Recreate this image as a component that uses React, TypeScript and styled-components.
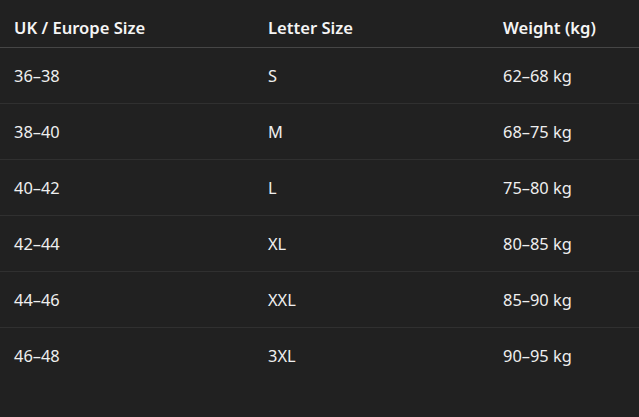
import React from "react";
import styled, { createGlobalStyle } from "styled-components";

const Global = createGlobalStyle`
  html, body { margin: 0; padding: 0; background: #212121; }
  body { font-family: "Noto Sans", "Open Sans", sans-serif; color: #ececec; }
`;

const Table = styled.div`
  display: grid;
  grid-template-columns: 254px 235px 1fr;
  width: 639px;
`;

const HeadCell = styled.div`
  height: 48px;
  box-sizing: border-box;
  display: flex;
  align-items: center;
  padding: 8px 0 0 14px;
  font-size: 16.6px;
  font-weight: 600;
  color: #f5f5f5;
  border-bottom: 1px solid #464646;
`;

const Cell = styled.div<{ $last?: boolean }>`
  height: 56px;
  box-sizing: border-box;
  display: flex;
  align-items: center;
  padding-left: 14px;
  font-size: 16.4px;
  font-weight: 400;
  color: #efefef;
  border-bottom: 1px solid ${(p) => (p.$last ? "transparent" : "#303030")};
`;

const headers = ["UK / Europe Size", "Letter Size", "Weight (kg)"];
const rows = [
  ["36–38", "S", "62–68 kg"],
  ["38–40", "M", "68–75 kg"],
  ["40–42", "L", "75–80 kg"],
  ["42–44", "XL", "80–85 kg"],
  ["44–46", "XXL", "85–90 kg"],
  ["46–48", "3XL", "90–95 kg"],
];

export default function App() {
  return (
    <>
      <Global />
      <Table>
        {headers.map((h) => (
          <HeadCell key={h}>{h}</HeadCell>
        ))}
        {rows.map((r, i) =>
          r.map((c, j) => (
            <Cell key={`${i}-${j}`} $last={i === rows.length - 1}>
              {c}
            </Cell>
          ))
        )}
      </Table>
    </>
  );
}
